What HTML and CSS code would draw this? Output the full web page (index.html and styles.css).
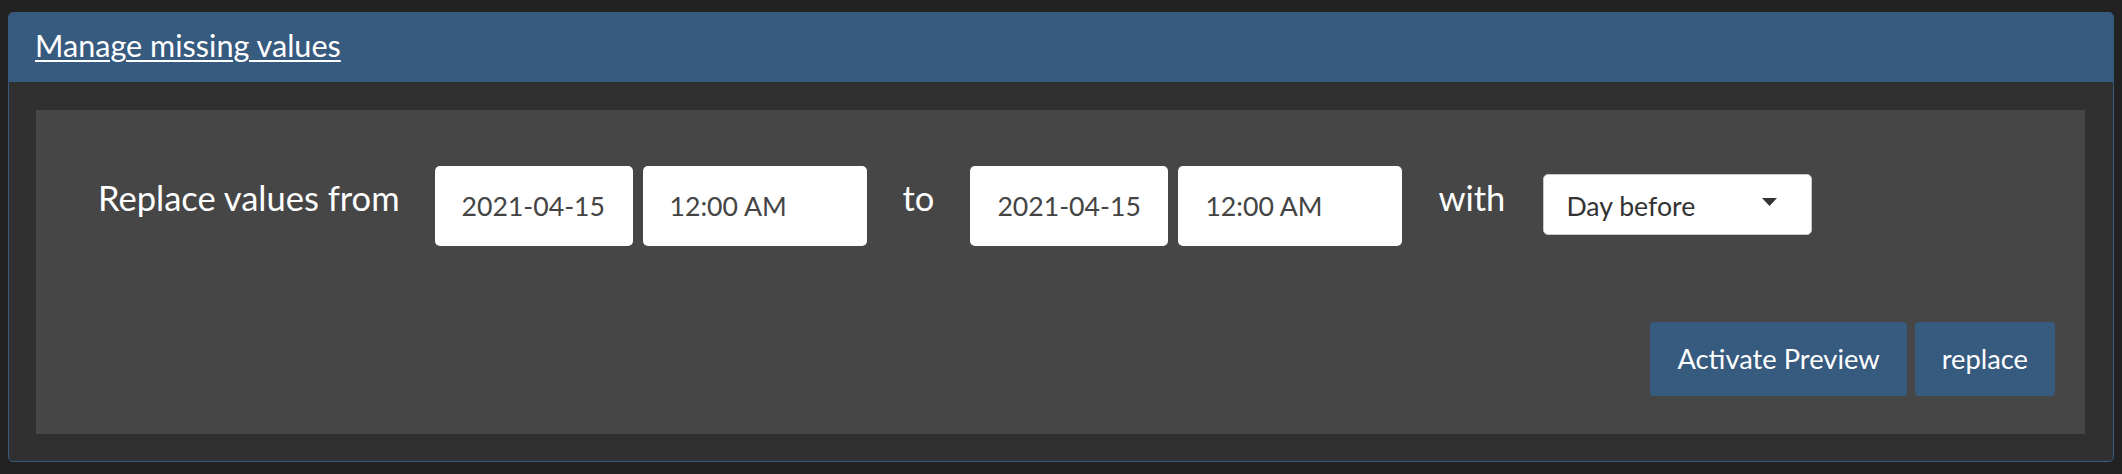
FILE: index.html
```html
<!DOCTYPE html>
<html lang="en">
<head>
<meta charset="utf-8">
<title>Manage missing values</title>
<link rel="stylesheet" href="styles.css">
</head>
<body>
<div class="card">
  <div class="card-header"><a class="card-title" href="#">Manage missing values</a></div>
  <div class="card-body">
    <div class="panel">
      <div class="form-row">
        <span class="lbl lbl-first">Replace values from</span>
        <div class="field field-date">2021-04-15</div>
        <div class="field field-time">12:00 AM</div>
        <span class="lbl lbl-mid">to</span>
        <div class="field field-date">2021-04-15</div>
        <div class="field field-time">12:00 AM</div>
        <span class="lbl lbl-mid">with</span>
        <div class="select">
          <span class="select-text">Day before</span>
          <svg class="caret" width="15" height="8" viewBox="0 0 15 8"><path d="M0 0H15L7.5 8Z" fill="#333"/></svg>
        </div>
      </div>
      <div class="actions">
        <button class="btn">Activate Preview</button>
        <button class="btn">replace</button>
      </div>
    </div>
  </div>
</div>
</body>
</html>
```
FILE: styles.css
```css
html, body {
  background: #222222;
}
body {
  margin: 8px;
  font-family: Lato, "Open Sans", "Liberation Sans", sans-serif;
  color: #ffffff;
}
.card {
  margin-top: 4px;
  border: 1px solid #375a7f;
  border-radius: 5px;
  background: #303030;
  overflow: hidden;
}
.card-header {
  background: #375a7f;
  padding: 14px 25px 17px 26px;
  line-height: 38px;
  font-size: 30.6px;
}
.card-title {
  color: #ffffff;
  text-decoration: underline;
  text-decoration-thickness: 2px;
  text-underline-offset: 3px;
}
.card-body {
  padding: 28px 28px 27px 27px;
}
.panel {
  background: #464646;
  padding: 56px 30px 38px 62px;
  display: flex;
  flex-direction: column;
}
.form-row {
  display: flex;
  align-items: flex-start;
  height: 80px;
}
.lbl {
  font-size: 34.5px;
  line-height: 42px;
  margin-top: 11px;
  color: #ffffff;
  white-space: nowrap;
}
.lbl-first {
  margin-right: 35px;
}
.lbl-mid {
  margin: 11px 36px 0;
}
.field {
  box-sizing: border-box;
  height: 80px;
  background: #ffffff;
  border-radius: 5px;
  color: #444444;
  font-size: 26.67px;
  line-height: 32px;
  padding: 24px 0 0 27px;
  white-space: nowrap;
}
.field-date {
  width: 198px;
}
.field-time {
  width: 224px;
  margin-left: 10px;
}
.select {
  box-sizing: border-box;
  width: 269px;
  height: 61px;
  margin-top: 8px;
  margin-left: 2px;
  background: #ffffff;
  border: 1px solid #c8c8c8;
  border-radius: 5px;
  color: #333333;
  font-size: 26.67px;
  line-height: 32px;
  padding: 0 34px 0 22px;
  display: flex;
  align-items: center;
  justify-content: space-between;
}
.select-text {
  padding-top: 2px;
}
.caret {
  display: block;
  margin-top: -6px;
}
.actions {
  margin-top: 76px;
  display: flex;
  justify-content: flex-end;
  gap: 8px;
}
.btn {
  height: 74px;
  padding: 0 27px;
  background: #375a7f;
  border: none;
  border-radius: 4px;
  color: #ffffff;
  font-family: Lato, "Open Sans", "Liberation Sans", sans-serif;
  font-size: 27.3px;
  line-height: 32px;
}
```
